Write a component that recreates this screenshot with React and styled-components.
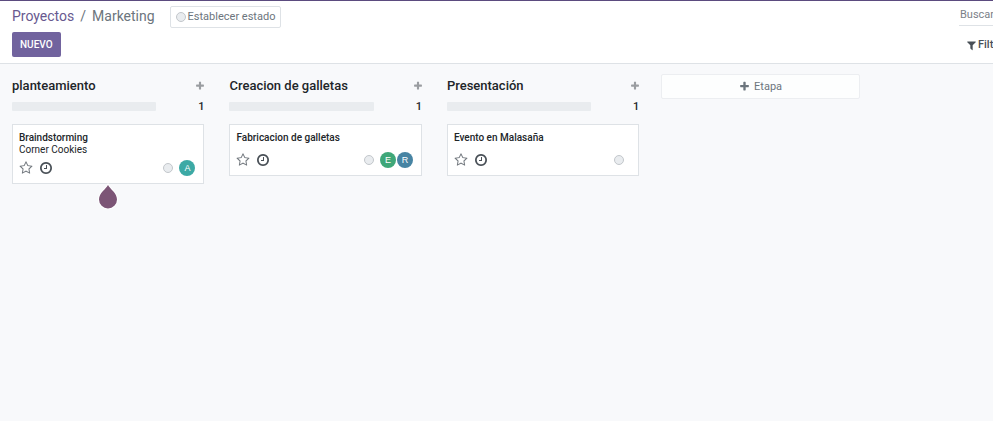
import React from "react";
import styled, { createGlobalStyle } from "styled-components";

const GlobalStyle = createGlobalStyle`
  *, *::before, *::after { box-sizing: border-box; }
  body {
    margin: 0;
    background: #f8f9fb;
    color: #212529;
    font-family: Roboto, "Liberation Sans", sans-serif;
    font-size: 11px;
    line-height: 12px;
    overflow-x: hidden;
  }
  button, input { font: inherit; margin: 0; }
  h2, h3, p, ol { margin: 0; padding: 0; font: inherit; }
`;

const Page = styled.div`
  min-height: 100vh;
  overflow: hidden;
`;

const Header = styled.header`
  display: grid;
  grid-template-columns: minmax(0, 1fr) 34px;
  height: 64px;
  background: #fff;
  border-top: 1px solid #5b4b7f;
  border-bottom: 1px solid #dee2e6;
`;

const HeaderMain = styled.div`
  display: flex;
  flex-direction: column;
  align-items: flex-start;
  gap: 4px;
  padding: 5px 12px 0;
`;

const TitleRow = styled.div`
  display: flex;
  align-items: center;
  gap: 15px;
`;

const Breadcrumb = styled.ol`
  display: flex;
  gap: 6px;
  list-style: none;
  font-size: 14px;
  line-height: 18px;
  padding-bottom: 2px;
  color: #6c757d;
  white-space: nowrap;
`;

const CrumbLink = styled.a`
  color: #68598f;
  text-decoration: none;
`;

const StatusButton = styled.button`
  display: flex;
  align-items: center;
  gap: 2px;
  height: 22px;
  padding: 0 5px;
  border: 1px solid #dee2e6;
  border-radius: 2px;
  background: #fff;
  color: #6c757d;
  white-space: nowrap;
`;

const PrimaryButton = styled.button`
  height: 25px;
  padding: 0 8px;
  border: 0;
  border-radius: 2px;
  background: #71639e;
  color: #fff;
  font-size: 10px;
  font-weight: 500;
  text-transform: uppercase;
`;

const SearchArea = styled.div`
  display: flex;
  flex-direction: column;
  align-items: flex-start;
  gap: 13px;
`;

const SearchInput = styled.input`
  width: 240px;
  height: 25px;
  padding: 2px 1px 0;
  border: 0;
  border-bottom: 1px solid #dee2e6;
  background: transparent;
  color: #495057;
  outline: none;
  &::placeholder { color: #7b8188; opacity: 1; }
`;

const FilterButton = styled.button`
  display: flex;
  align-items: center;
  gap: 1px;
  margin-left: 7px;
  padding: 0;
  border: 0;
  background: none;
  color: #495057;
  font-weight: 500;
`;

const Board = styled.main`
  display: flex;
  align-items: flex-start;
  padding-top: 10px;
`;

const Column = styled.section`
  flex: 0 0 21.9%;
  padding: 0 13px 0 12px;
`;

const NewColumn = styled.div`
  flex: 0 0 21.9%;
  padding: 0 10px 0 9px;
`;

const AddStageButton = styled.button`
  display: flex;
  align-items: center;
  justify-content: center;
  gap: 4px;
  width: 100%;
  height: 25px;
  border: 1px solid #eceef1;
  border-radius: 2px;
  background: #fdfefe;
  color: #6c757d;
`;

const ColumnHeader = styled.div`
  display: flex;
  align-items: center;
  justify-content: space-between;
  height: 24px;
`;

const ColumnTitle = styled.h2`
  font-size: 13px;
  line-height: 16px;
  font-weight: 500;
  white-space: nowrap;
`;

const IconButton = styled.button`
  display: flex;
  padding: 0;
  border: 0;
  background: none;
  color: ${(p) => p.$color};
`;

const AddTaskButton = styled(IconButton)`
  width: 8px;
  justify-content: center;
`;

const ProgressRow = styled.div`
  display: flex;
  align-items: center;
  justify-content: space-between;
  height: 17px;
  font-weight: 500;
`;

const ProgressTrack = styled.div`
  width: 75%;
  height: 9px;
  border-radius: 1px;
  background: #e9ecef;
`;

const Card = styled.article`
  position: relative;
  margin-top: 9px;
  padding: 7px 8px 7px 6px;
  border: 1px solid #dee2e6;
  background: #fff;
`;

const CardTitle = styled.h3`
  font-size: 10px;
  font-weight: 500;
`;

const Customer = styled.p`
  font-size: 10px;
`;

const CardFooter = styled.div`
  display: flex;
  align-items: center;
  justify-content: space-between;
  height: 16px;
  margin-top: ${(p) => (p.$compact ? 4 : 8)}px;
`;

const FooterGroup = styled.div`
  display: flex;
  align-items: center;
  gap: 6px;
`;

const StateDot = styled.span`
  display: block;
  width: 10px;
  height: 10px;
  border: 1px solid #c3c7cb;
  border-radius: 50%;
  background: #e9ecef;
`;

const Avatars = styled.div`
  display: flex;
  gap: 1px;
`;

const Avatar = styled.span`
  width: 16px;
  height: 16px;
  border-radius: 50%;
  background: ${(p) => p.$color};
  color: #fff;
  font-family: "Liberation Sans", Arial, sans-serif;
  font-size: 9px;
  line-height: 16px;
  text-align: center;
`;

const TourDrop = styled.svg`
  position: absolute;
  top: 100%;
  left: 50%;
  width: 20px;
  height: 26px;
  transform: translateX(-50%);
`;

const ICONS = {
  star: "M1201 1004l306-297-422-62-189-382-189 382-422 62 306 297-73 421 378-199 377 199zm527-357q0 22-26 48l-363 354 86 500q1 7 1 20 0 50-41 50-19 0-40-12l-449-236-449 236q-22 12-40 12-21 0-31.5-14.5t-10.5-35.5q0-6 2-20l86-500-364-354q-25-27-25-48 0-37 56-46l502-73 225-455q19-41 49-41t49 41l225 455 502 73q56 9 56 46z",
  clock: "M1024 544v448q0 14-9 23t-23 9h-320q-14 0-23-9t-9-23v-64q0-14 9-23t23-9h224v-352q0-14 9-23t23-9h64q14 0 23 9t9 23zm416 352q0-148-73-273t-198-198-273-73-273 73-198 198-73 273 73 273 198 198 273 73 273-73 198-198 73-273zm224 0q0 209-103 385.5t-279.5 279.5-385.5 103-385.5-103-279.5-279.5-103-385.5 103-385.5 279.5-279.5 385.5-103 385.5 103 279.5 279.5 103 385.5z",
  plus: "M1600 736v192q0 40-28 68t-68 28h-416v416q0 40-28 68t-68 28h-192q-40 0-68-28t-28-68v-416h-416q-40 0-68-28t-28-68v-192q0-40 28-68t68-28h416v-416q0-40 28-68t68-28h192q40 0 68 28t28 68v416h416q40 0 68 28t28 68z",
  filter: "M1595 295q17 41-14 70l-493 493v742q0 42-39 59-13 5-25 5-19 0-45-19l-256-256q-19-19-19-45v-486l-493-493q-31-29-14-70 17-39 59-39h1280q42 0 59 39z",
};

const Glyph = styled.svg`
  flex: none;
`;

function Icon({ name, size }) {
  return (
    <Glyph width={size} height={size} viewBox="0 0 1792 1792" fill="currentColor" aria-hidden="true">
      <path d={ICONS[name]} />
    </Glyph>
  );
}

const columns = [
  {
    title: "planteamiento",
    task: { title: "Braindstorming", customer: "Corner Cookies", users: [["A", "#3ca9a5"]], tip: true },
  },
  {
    title: "Creacion de galletas",
    task: { title: "Fabricacion de galletas", users: [["E", "#3fa779"], ["R", "#4784a3"]] },
  },
  { title: "Presentación", task: { title: "Evento en Malasaña", users: [] } },
];

function TaskCard({ task }) {
  return (
    <Card>
      <CardTitle>{task.title}</CardTitle>
      {task.customer && <Customer>{task.customer}</Customer>}
      <CardFooter $compact={Boolean(task.customer)}>
        <FooterGroup>
          <IconButton type="button" $color="#73797f" aria-label="Prioridad">
            <Icon name="star" size={14} />
          </IconButton>
          <IconButton type="button" $color="#495057" aria-label="Actividades">
            <Icon name="clock" size={14} />
          </IconButton>
        </FooterGroup>
        <FooterGroup>
          <IconButton type="button" aria-label="Estado">
            <StateDot />
          </IconButton>
          <Avatars>
            {task.users.map(([letter, color]) => (
              <Avatar key={letter} $color={color}>{letter}</Avatar>
            ))}
          </Avatars>
        </FooterGroup>
      </CardFooter>
      {task.tip && (
        <TourDrop viewBox="0 0 20 26" aria-hidden="true">
          <path
            d="M10 2C12 6 19 10 19 16.5A9 9 0 0 1 1 16.5C1 10 8 6 10 2Z"
            fill="#7c5576"
            stroke="#fff"
            strokeWidth="2"
            paintOrder="stroke"
          />
        </TourDrop>
      )}
    </Card>
  );
}

export default function App() {
  return (
    <Page>
      <GlobalStyle />
      <Header>
        <HeaderMain>
          <TitleRow>
            <Breadcrumb>
              <li><CrumbLink href="#proyectos">Proyectos</CrumbLink></li>
              <li aria-hidden="true">/</li>
              <li>Marketing</li>
            </Breadcrumb>
            <StatusButton type="button">
              <StateDot />
              Establecer estado
            </StatusButton>
          </TitleRow>
          <PrimaryButton type="button">Nuevo</PrimaryButton>
        </HeaderMain>
        <SearchArea>
          <SearchInput type="text" placeholder="Buscar..." aria-label="Buscar" />
          <FilterButton type="button">
            <Icon name="filter" size={11} />
            Filtros
          </FilterButton>
        </SearchArea>
      </Header>
      <Board>
        {columns.map(({ title, task }) => (
          <Column key={title}>
            <ColumnHeader>
              <ColumnTitle>{title}</ColumnTitle>
              <AddTaskButton type="button" $color="#9a9da1" aria-label="Añadir tarea">
                <Icon name="plus" size={10} />
              </AddTaskButton>
            </ColumnHeader>
            <ProgressRow>
              <ProgressTrack />
              <span>1</span>
            </ProgressRow>
            <TaskCard task={task} />
          </Column>
        ))}
        <NewColumn>
          <AddStageButton type="button">
            <Icon name="plus" size={11} />
            Etapa
          </AddStageButton>
        </NewColumn>
      </Board>
    </Page>
  );
}
